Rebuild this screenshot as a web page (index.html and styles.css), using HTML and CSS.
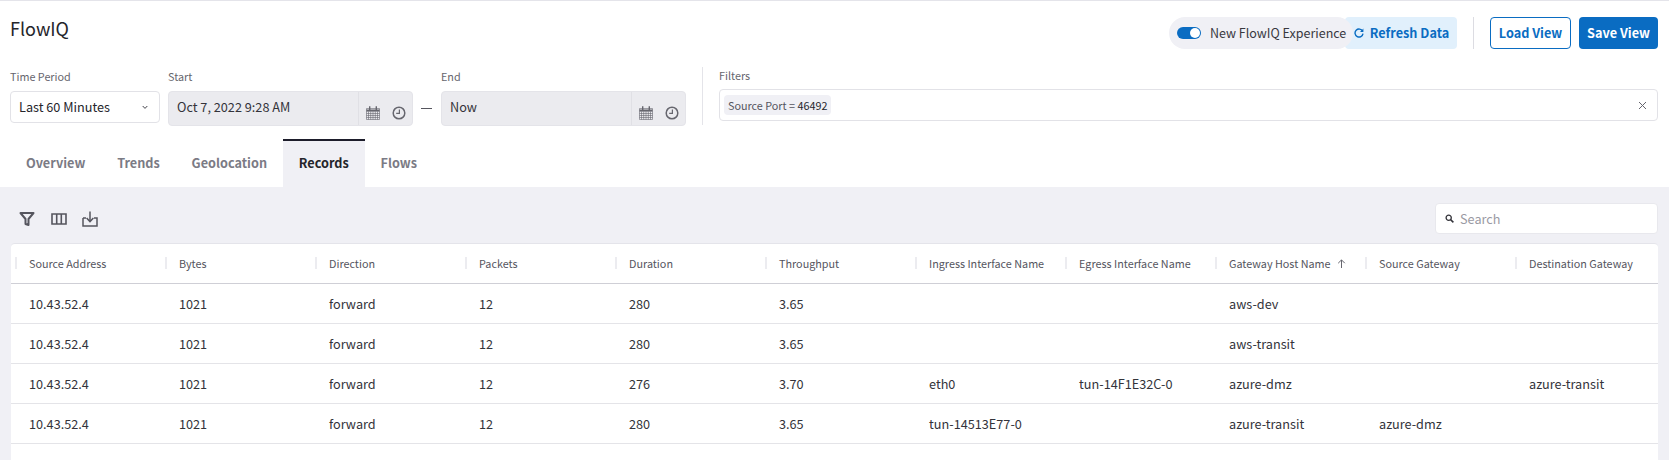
FILE: index.html
```html
<!doctype html>
<html lang="en">
  <head>
    <meta charset="utf-8">
    <title>FlowIQ</title>
    <link rel="stylesheet" href="styles.css">
  </head>
  <body>
    <svg class="defs" width="0" height="0">
      <symbol id="cal" viewBox="0 0 14 14">
        <path d="M.5 2.5h13v11H.5zM.5 5.5h13M.5 7.5h13M.5 9.5h13M.5 11.5h13M2.5 5.5v8M4.7 5.5v8M7 5.5v8M9.3 5.5v8M11.5 5.5v8" fill="none" stroke="currentColor" stroke-width=".6"/>
        <path d="M3 .2h1.4v3.2H3zM9.6 .2H11v3.2H9.6z M.5 3.4h13v1.6H.5z" fill="currentColor"/>
      </symbol>
      <symbol id="clock" viewBox="0 0 14 14">
        <circle cx="7" cy="7" r="5.8" fill="none" stroke="currentColor" stroke-width="1.5"/>
        <path d="M7.4 3.4v4H4.2" fill="none" stroke="currentColor" stroke-width="1.2"/>
      </symbol>
    </svg>

    <header class="top">
      <h1 class="title">FlowIQ</h1>
      <div class="actions">
        <div class="experience">
          <span class="toggle"></span>
          <span>New FlowIQ Experience</span>
        </div>
        <button class="btn btn-light" type="button">
          <svg width="10" height="10" viewBox="0 0 10 10"><path d="M8.6 3.2A4 4 0 1 0 9 5.6" fill="none" stroke="currentColor" stroke-width="1.4"/><path d="M9.4 .6v3.4H6z" fill="currentColor"/></svg>
          <span>Refresh Data</span>
        </button>
        <span class="vline"></span>
        <button class="btn btn-outline" type="button">Load View</button>
        <button class="btn btn-solid" type="button">Save View</button>
      </div>
    </header>

    <section class="controls">
      <div class="field">
        <label class="label">Time Period</label>
        <div class="select">
          <span>Last 60 Minutes</span>
          <svg width="6" height="5" viewBox="0 0 6 5"><path d="M.7 1l2.3 2.4L5.3 1" fill="none" stroke="#44444c" stroke-width="1"/></svg>
        </div>
      </div>
      <div class="field field-start">
        <label class="label">Start</label>
        <div class="date">
          <span class="date-text">Oct 7, 2022 9:28 AM</span>
          <span class="date-icons">
            <svg width="14" height="14"><use href="#cal"/></svg>
            <svg width="14" height="14"><use href="#clock"/></svg>
          </span>
        </div>
      </div>
      <span class="dash"></span>
      <div class="field">
        <label class="label">End</label>
        <div class="date">
          <span class="date-text">Now</span>
          <span class="date-icons">
            <svg width="14" height="14"><use href="#cal"/></svg>
            <svg width="14" height="14"><use href="#clock"/></svg>
          </span>
        </div>
      </div>
      <span class="controls-line"></span>
      <div class="field field-filters">
        <label class="label">Filters</label>
        <div class="filters">
          <span class="chip">Source Port = <b>46492</b></span>
          <svg width="9" height="9" viewBox="0 0 9 9"><path d="M1 1l7 7M8 1L1 8" stroke="#66666e" stroke-width="1"/></svg>
        </div>
      </div>
    </section>

    <nav class="tabs">
      <a class="tab">Overview</a>
      <a class="tab">Trends</a>
      <a class="tab">Geolocation</a>
      <a class="tab active">Records</a>
      <a class="tab">Flows</a>
    </nav>

    <main class="content">
      <div class="toolbar">
        <div class="tools">
          <svg width="16" height="16" viewBox="0 0 16 16"><path d="M1.5 2h13L9.5 8v6l-3-1V8z" fill="none" stroke="#55555e" stroke-width="2" stroke-linejoin="round"/></svg>
          <svg width="16" height="16" viewBox="0 0 16 16"><path d="M1 3h14v10H1zM5.7 3v10M10.3 3v10" fill="none" stroke="#55555e" stroke-width="1.6"/></svg>
          <svg width="16" height="16" viewBox="0 0 16 16"><path d="M1 7v8h14V7h-3M4 7H1M8 .5V10" fill="none" stroke="#55555e" stroke-width="1.5"/><path d="M4.6 7L8 10.6 11.4 7" fill="none" stroke="#55555e" stroke-width="1.5"/></svg>
        </div>
        <div class="search">
          <svg width="9" height="9" viewBox="0 0 9 9"><circle cx="3.7" cy="3.7" r="2.6" fill="none" stroke="#33333a" stroke-width="1.3"/><path d="M5.6 5.6L8.4 8.4" stroke="#33333a" stroke-width="1.5"/></svg>
          <span>Search</span>
        </div>
      </div>

      <div class="table">
        <div class="row head">
          <div class="cell">Source Address</div>
          <div class="cell">Bytes</div>
          <div class="cell">Direction</div>
          <div class="cell">Packets</div>
          <div class="cell">Duration</div>
          <div class="cell">Throughput</div>
          <div class="cell">Ingress Interface Name</div>
          <div class="cell">Egress Interface Name</div>
          <div class="cell">Gateway Host Name
            <svg class="sort" width="9" height="9" viewBox="0 0 9 9"><path d="M4.5 9V1M1.2 4.2l3.3-3.3 3.3 3.3" fill="none" stroke="#66666e" stroke-width="1"/></svg>
          </div>
          <div class="cell">Source Gateway</div>
          <div class="cell">Destination Gateway</div>
        </div>
        <div class="row">
          <div class="cell">10.43.52.4</div><div class="cell">1021</div><div class="cell">forward</div><div class="cell">12</div><div class="cell">280</div><div class="cell">3.65</div><div class="cell"></div><div class="cell"></div><div class="cell">aws-dev</div><div class="cell"></div><div class="cell"></div>
        </div>
        <div class="row">
          <div class="cell">10.43.52.4</div><div class="cell">1021</div><div class="cell">forward</div><div class="cell">12</div><div class="cell">280</div><div class="cell">3.65</div><div class="cell"></div><div class="cell"></div><div class="cell">aws-transit</div><div class="cell"></div><div class="cell"></div>
        </div>
        <div class="row">
          <div class="cell">10.43.52.4</div><div class="cell">1021</div><div class="cell">forward</div><div class="cell">12</div><div class="cell">276</div><div class="cell">3.70</div><div class="cell">eth0</div><div class="cell">tun-14F1E32C-0</div><div class="cell">azure-dmz</div><div class="cell"></div><div class="cell">azure-transit</div>
        </div>
        <div class="row">
          <div class="cell">10.43.52.4</div><div class="cell">1021</div><div class="cell">forward</div><div class="cell">12</div><div class="cell">280</div><div class="cell">3.65</div><div class="cell">tun-14513E77-0</div><div class="cell"></div><div class="cell">azure-transit</div><div class="cell">azure-dmz</div><div class="cell"></div>
        </div>
      </div>
    </main>
  </body>
</html>
```

FILE: styles.css
```css
html, body {
  height: 100%;
}
body {
  margin: 0;
  background-color: #fff;
  color: #25252b;
  font-family: "Noto Sans CJK SC", "Source Sans Pro", "Noto Sans", sans-serif;
  font-size: 12.7px;
  line-height: 20px;
  border-top: 1px solid #e4e4ea;
  box-sizing: border-box;
  overflow: hidden;
}
.defs {
  display: block;
  height: 0;
}
.top {
  display: flex;
  justify-content: space-between;
  align-items: flex-start;
  padding: 16px 11px 0 10px;
  height: 50px;
  box-sizing: content-box;
}
.title {
  margin: -2px 0 0;
  font-size: 18px;
  font-weight: 400;
  line-height: 26px;
}
.actions {
  display: flex;
  align-items: stretch;
  height: 32px;
}
.experience {
  display: flex;
  align-items: center;
  gap: 9px;
  width: 184px;
  padding-left: 8px;
  box-sizing: border-box;
  background-color: #f0f0f5;
  border-radius: 16px;
  position: relative;
  z-index: 1;
  font-size: 12.5px;
  color: #38383f;
  white-space: nowrap;
}
.toggle {
  width: 24px;
  height: 12px;
  border-radius: 6px;
  background-color: #0a6cc2;
  position: relative;
}
.toggle::after {
  content: "";
  position: absolute;
  right: 1px;
  top: 1px;
  width: 10px;
  height: 10px;
  border-radius: 50%;
  background-color: #fff;
}
.btn {
  font: inherit;
  font-weight: 700;
  border: 1px solid transparent;
  border-radius: 4px;
  padding: 0;
  display: flex;
  align-items: center;
  justify-content: center;
  white-space: nowrap;
}
.btn-light {
  width: 112px;
  margin-left: -8px;
  padding-left: 1px;
  gap: 6px;
  background-color: #e1f0fc;
  color: #0a6cc2;
}
.vline {
  width: 1px;
  background-color: #dcdce2;
  margin: 0 16px;
}
.btn-outline {
  width: 81px;
  background-color: #fff;
  border-color: #0a6cc2;
  color: #0a6cc2;
}
.btn-solid {
  width: 79px;
  margin-left: 8px;
  background-color: #0a6cc2;
  color: #fff;
}
.controls {
  display: flex;
  align-items: flex-start;
  padding: 0 11px 4px 10px;
  height: 68px;
}
.field {
  display: flex;
  flex-direction: column;
}
.field-start {
  margin-left: 8px;
}
.label {
  font-size: 10.8px;
  line-height: 16px;
  color: #66666e;
  margin-top: 1px;
  margin-bottom: 7px;
}
.select {
  width: 150px;
  height: 32px;
  box-sizing: border-box;
  border: 1px solid #e2e2e7;
  border-radius: 4px;
  padding: 0 11px 0 8px;
  display: flex;
  align-items: center;
  justify-content: space-between;
}
.date {
  width: 245px;
  height: 35px;
  box-sizing: border-box;
  background-color: #ebebef;
  border: 1px solid #e4e4e9;
  border-radius: 4px;
  display: flex;
  justify-content: space-between;
  color: #33333a;
}
.date-text {
  padding: 5px 8px 0;
}
.date-icons {
  width: 54px;
  box-sizing: border-box;
  border-left: 1px solid #e0e0e5;
  display: flex;
  gap: 12px;
  padding: 14px 0 0 7px;
  color: #66666e;
}
.dash {
  width: 11px;
  height: 1px;
  background-color: #55555e;
  margin: 41px 9px 0 8px;
}
.controls-line {
  width: 1px;
  height: 58px;
  background-color: #e4e4e9;
  margin: 0 16px;
}
.field-filters {
  flex: 1;
}
.field-filters .label {
  margin-top: 0;
  margin-bottom: 8px;
}
.filters {
  height: 32px;
  box-sizing: border-box;
  margin-top: -2px;
  border: 1px solid #e2e2e7;
  border-radius: 4px;
  padding: 0 10px 0 4px;
  display: flex;
  align-items: center;
  justify-content: space-between;
}
.chip {
  background-color: #f0f0f5;
  border-radius: 4px;
  height: 20px;
  padding: 0 4px;
  font-size: 10.8px;
  line-height: 20px;
  color: #55555e;
}
.chip b {
  font-weight: 400;
  color: #25252b;
}
.tabs {
  display: flex;
  padding-left: 10px;
  height: 48px;
}
.tab {
  padding: 12px 15.9px 0;
  border-top: 2px solid transparent;
  font-weight: 700;
  color: #7b7b85;
}
.tab.active {
  background-color: #f0f0f5;
  border-top-color: #1d1d2b;
  color: #25252b;
}
.content {
  background-color: #f0f0f5;
  height: 273px;
  padding: 16px 11px 0;
}
.toolbar {
  display: flex;
  justify-content: space-between;
  align-items: flex-start;
  height: 40px;
}
.tools {
  display: flex;
  gap: 15.5px;
  padding: 8px 0 0 8px;
}
.search {
  width: 223px;
  height: 31px;
  box-sizing: border-box;
  background-color: #fff;
  border: 1px solid #e8e8ed;
  border-radius: 4px;
  padding-left: 9px;
  display: flex;
  align-items: center;
  gap: 6px;
  color: #9a9aa3;
}
.table {
  background-color: #fff;
  border-radius: 4px 4px 0 0;
  border-top: 1px solid #e4e4ea;
  height: 240px;
  overflow: hidden;
}
.row {
  display: grid;
  grid-template-columns: repeat(11, 150px);
  height: 40px;
  padding-left: 4px;
  align-items: center;
  border-bottom: 1px solid #e4e4e8;
  box-sizing: border-box;
}
.cell {
  padding-left: 14px;
  white-space: nowrap;
  color: #33333a;
}
.head {
  padding-bottom: 2px;
  border-bottom: 1px solid #cfcfd6;
}
.head .cell {
  font-size: 10.8px;
  line-height: 12px;
  color: #55555e;
  border-left: 2px solid #ececf0;
  padding-left: 12px;
}
.sort {
  margin-left: 4px;
}
```
